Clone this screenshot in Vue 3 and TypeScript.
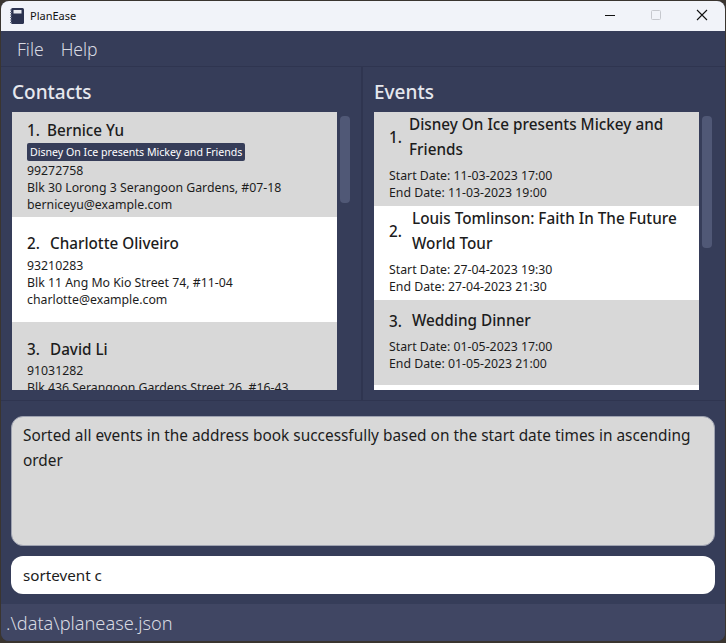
<script setup lang="ts">
interface Contact { name: string; tag?: string; phone: string; address: string; email?: string }
interface EventItem { title: string[]; start: string; end: string }
const contacts: Contact[] = [
  { name: 'Bernice Yu', tag: 'Disney On Ice presents Mickey and Friends', phone: '99272758', address: 'Blk 30 Lorong 3 Serangoon Gardens, #07-18', email: 'berniceyu@example.com' },
  { name: 'Charlotte Oliveiro', phone: '93210283', address: 'Blk 11 Ang Mo Kio Street 74, #11-04', email: 'charlotte@example.com' },
  { name: 'David Li', phone: '91031282', address: 'Blk 436 Serangoon Gardens Street 26, #16-43' },
]
const events: EventItem[] = [
  { title: ['Disney On Ice presents Mickey and', 'Friends'], start: '11-03-2023 17:00', end: '11-03-2023 19:00' },
  { title: ['Louis Tomlinson: Faith In The Future', 'World Tour'], start: '27-04-2023 19:30', end: '27-04-2023 21:30' },
  { title: ['Wedding Dinner'], start: '01-05-2023 17:00', end: '01-05-2023 21:00' },
]
</script>

<template>
  <div class="window">
    <header class="titlebar">
      <svg class="app-icon" width="14" height="16" viewBox="0 0 14 16">
        <rect x="1" y="0" width="13" height="16" rx="1.5" fill="#2c3350" />
        <rect x="3.5" y="2" width="8" height="3.5" fill="#e8eaf0" />
        <path d="M0 2h2M0 4.5h2M0 7h2M0 9.5h2M0 12h2M0 14.5h2" stroke="#6a7088" stroke-width="1" />
      </svg>
      <span class="app-name">PlanEase</span>
      <div class="controls">
        <svg width="46" height="16" viewBox="0 0 46 16"><path d="M18 8.5h10" stroke="#111" stroke-width="1" /></svg>
        <svg width="46" height="16" viewBox="0 0 46 16"><rect x="18.5" y="3.5" width="9" height="9" rx="1" fill="none" stroke="#c6c8ce" stroke-width="1" /></svg>
        <svg width="46" height="16" viewBox="0 0 46 16"><path d="M18 3l10 10M28 3L18 13" stroke="#111" stroke-width="1.1" /></svg>
      </div>
    </header>

    <nav class="menubar">
      <span>File</span>
      <span>Help</span>
    </nav>

    <main class="panes">
      <section class="pane left">
        <h2>Contacts</h2>
        <div class="list-row">
          <div class="list">
            <article v-for="(c, i) in contacts" :key="c.name" class="card contact" :class="{ alt: i % 2 === 0 }">
              <div class="name"><span class="idx" :class="{ narrow: i === 0 }">{{ i + 1 }}.</span>{{ c.name }}</div>
              <span v-if="c.tag" class="tag">{{ c.tag }}</span>
              <div class="line">{{ c.phone }}</div>
              <div class="line">{{ c.address }}</div>
              <div v-if="c.email" class="line">{{ c.email }}</div>
            </article>
          </div>
          <div class="track"><div class="thumb"></div></div>
        </div>
      </section>
      <section class="pane right">
        <h2>Events</h2>
        <div class="list-row">
          <div class="list">
            <article v-for="(e, i) in events" :key="e.start" class="card event" :class="{ alt: i % 2 === 0, single: e.title.length === 1 }">
              <div class="event-head">
                <span class="idx" :class="{ narrow: i === 0 }">{{ i + 1 }}.</span>
                <div class="event-title"><div v-for="t in e.title" :key="t">{{ t }}</div></div>
              </div>
              <div class="line">Start Date: {{ e.start }}</div>
              <div class="line">End Date: {{ e.end }}</div>
            </article>
          </div>
          <div class="track"><div class="thumb event-thumb"></div></div>
        </div>
      </section>
    </main>

    <section class="bottom">
      <div class="result">Sorted all events in the address book successfully based on the start date times in ascending order</div>
      <div class="command">sortevent c</div>
    </section>

    <footer class="status">.\data\planease.json</footer>
  </div>
</template>

<style>
html, body { margin: 0; background: #3a3530; }
</style>

<style scoped>
.window {
  width: 724px;
  height: 640px;
  margin: 1px 0 0 1px;
  display: flex;
  flex-direction: column;
  background: #363d59;
  border-radius: 8px;
  overflow: hidden;
  font-family: "Noto Sans", "Open Sans", sans-serif;
  color: #1c1c1c;
}
.titlebar {
  height: 30px;
  flex: none;
  display: flex;
  align-items: center;
  background: #f1f3f9;
  padding-left: 9px;
  box-sizing: border-box;
}
.app-icon { margin-right: 6px; margin-top: -1px; }
.app-name { font-size: 11px; color: #111; padding-bottom: 1px; }
.controls { margin-left: auto; display: flex; padding-bottom: 2px; }
.menubar {
  height: 35px;
  flex: none;
  display: flex;
  align-items: center;
  gap: 17px;
  padding-left: 16px;
  font-size: 17.5px;
  font-weight: 300;
  color: #d8dae2;
  box-sizing: border-box;
}
.panes {
  height: 335px;
  flex: none;
  display: flex;
  border-top: 1px solid #2f3550;
  border-bottom: 1px solid #2f3550;
  box-sizing: border-box;
}
.pane {
  padding: 0 0 0 11px;
  box-sizing: border-box;
  min-width: 0;
}
.pane.left { flex: none; width: 360px; }
.pane.right { flex: 1; border-left: 2px solid #2f3550; padding-left: 11px; }
h2 {
  margin: 0;
  height: 45px;
  line-height: 50px;
  font-size: 19px;
  font-weight: 500;
  color: #e6e8ee;
}
.list-row { display: flex; height: 278px; }
.list {
  width: 325px;
  height: 278px;
  background: #fff;
  overflow: hidden;
  flex: none;
}
.track { padding: 4px 0 0 3px; }
.thumb {
  width: 10px;
  height: 87px;
  border-radius: 4px;
  background: #505876;
}
.event-thumb { height: 132px; }
.card { padding: 0 15px; box-sizing: border-box; background: #fff; display: flow-root; }
.card.alt { background: #d8d8d8; }
.contact { height: 105px; padding-top: 8px; }
.name {
  font-size: 15.25px;
  font-weight: 500;
  line-height: 20px;
  height: 20px;
  margin-bottom: 3px;
  color: #1c1c1c;
}
.contact:nth-child(2) .name { margin-top: 8px; margin-bottom: 4px; }
.contact:nth-child(3) .name { margin-top: 9px; margin-bottom: 3px; }
.idx { display: inline-block; width: 23px; font-weight: 500; }
.idx.narrow { width: 20px; }
.tag {
  display: block;
  width: fit-content;
  background: #363d59;
  color: #fff;
  font-size: 10.6px;
  line-height: 18px;
  height: 18px;
  padding: 0 3px;
  border-radius: 2px;
  margin-bottom: 1px;
}
.line { font-size: 12.3px; line-height: 17px; height: 17px; white-space: nowrap; color: #1c1c1c; }
.event { height: 94px; padding-top: 1px; }
.event.single { height: 85px; padding-top: 8px; }
.event-head {
  display: flex;
  align-items: center;
  font-size: 15.3px;
  font-weight: 500;
  margin-top: -1px;
  margin-bottom: 5px;
}
.single .event-head { margin-top: 0; }
.event-head .idx { flex: none; }
.event-title { line-height: 25px; white-space: nowrap; }
.bottom {
  padding: 15px 10px 10px;
  display: flex;
  flex-direction: column;
  gap: 10px;
  flex: none;
}
.result {
  height: 130px;
  box-sizing: border-box;
  background: #d8d8d8;
  border: 1px solid #9ea2b0;
  border-radius: 12px;
  padding: 6px 11px;
  font-size: 15.4px;
  line-height: 25px;
  color: #1c1c1c;
}
.command {
  height: 38px;
  box-sizing: border-box;
  background: #fff;
  border-radius: 12px;
  padding: 0 12px;
  font-size: 15.2px;
  line-height: 38px;
  color: #1c1c1c;
}
.status {
  flex: 1;
  background: #404663;
  display: flex;
  align-items: center;
  padding-left: 5px;
  font-size: 18.2px;
  font-weight: 300;
  color: #d8dae2;
}
</style>
